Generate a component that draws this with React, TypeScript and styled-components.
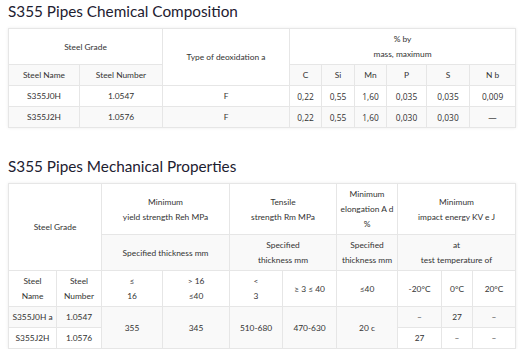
import React from "react";
import styled, { createGlobalStyle } from "styled-components";

const GlobalStyle = createGlobalStyle`
  html, body {
    margin: 0;
    padding: 0;
    background: #fff;
  }
  body {
    font-family: Lato, "Noto Sans", sans-serif;
    color: #333;
  }
`;

const Page = styled.div`
  padding: 0 0 0 8px;
  width: 510px;
`;

const Section = styled.section<{ $gap?: number }>`
  margin-top: ${(p) => p.$gap ?? 0}px;
`;

const Title = styled.h2`
  margin: 0 0 6px;
  font-size: 15.3px;
  line-height: 22px;
  font-weight: 400;
  color: #1d2030;
`;

const Table = styled.table`
  width: 508px;
  border-collapse: collapse;
  table-layout: fixed;
  box-shadow: 0 0 3px rgba(0, 0, 0, 0.08);

  tr:nth-child(even) td {
    background: #f9f9f9;
  }
`;

const Cell = styled.td<{ $num?: boolean }>`
  border: 1px solid #e6e6e6;
  padding: 3px 0 2px;
  font-size: 8.4px;
  line-height: 15px;
  text-align: center;
  vertical-align: middle;
  color: #333;
  background: #fff;
  white-space: nowrap;
  font-family: ${(p) => (p.$num ? '"Open Sans", Lato, sans-serif' : "inherit")};
`;

const chemCols = [71, 83, 127, 32, 33, 32, 40, 43, 46];
const mechCols = [48, 45, 61, 67, 53, 54, 61, 44, 31, 43];

const chemRows = [
  ["S355J0H", "1.0547", "F", "0,22", "0,55", "1,60", "0,035", "0,035", "0,009"],
  ["S355J2H", "1.0576", "F", "0,22", "0,55", "1,60", "0,030", "0,030", "—"],
];

function Cols({ widths }: { widths: number[] }) {
  return (
    <colgroup>
      {widths.map((w, i) => (
        <col key={i} style={{ width: w }} />
      ))}
    </colgroup>
  );
}

function ChemicalTable() {
  return (
    <Table>
      <Cols widths={chemCols} />
      <tbody>
        <tr>
          <Cell colSpan={2}>Steel Grade</Cell>
          <Cell rowSpan={2}>Type of deoxidation a</Cell>
          <Cell colSpan={6}>
            % by
            <br />
            mass, maximum
          </Cell>
        </tr>
        <tr>
          <Cell>Steel Name</Cell>
          <Cell>Steel Number</Cell>
          {["C", "Si", "Mn", "P", "S", "N b"].map((el) => (
            <Cell key={el}>{el}</Cell>
          ))}
        </tr>
        {chemRows.map((row) => (
          <tr key={row[0]}>
            {row.map((v, i) => (
              <Cell key={i} $num={i > 2}>
                {v}
              </Cell>
            ))}
          </tr>
        ))}
      </tbody>
    </Table>
  );
}

function MechanicalTable() {
  return (
    <Table>
      <Cols widths={mechCols} />
      <tbody>
        <tr>
          <Cell colSpan={2} rowSpan={2}>
            Steel Grade
          </Cell>
          <Cell colSpan={2}>
            Minimum
            <br />
            yield strength Reh MPa
          </Cell>
          <Cell colSpan={2}>
            Tensile
            <br />
            strength Rm MPa
          </Cell>
          <Cell>
            Minimum
            <br />
            elongation A d
            <br />%
          </Cell>
          <Cell colSpan={3}>
            Minimum
            <br />
            impact energy KV e J
          </Cell>
        </tr>
        <tr>
          <Cell colSpan={2}>Specified thickness mm</Cell>
          <Cell colSpan={2}>
            Specified
            <br />
            thickness mm
          </Cell>
          <Cell>
            Specified
            <br />
            thickness mm
          </Cell>
          <Cell colSpan={3}>
            at
            <br />
            test temperature of
          </Cell>
        </tr>
        <tr>
          <Cell>
            Steel
            <br />
            Name
          </Cell>
          <Cell>
            Steel
            <br />
            Number
          </Cell>
          <Cell>
            ≤
            <br />
            16
          </Cell>
          <Cell>
            &gt; 16
            <br />≤40
          </Cell>
          <Cell>
            &lt;
            <br />3
          </Cell>
          <Cell>≥ 3 ≤ 40</Cell>
          <Cell>≤40</Cell>
          <Cell>-20°C</Cell>
          <Cell>0°C</Cell>
          <Cell>20°C</Cell>
        </tr>
        <tr>
          <Cell>S355J0H a</Cell>
          <Cell>1.0547</Cell>
          <Cell rowSpan={2}>355</Cell>
          <Cell rowSpan={2}>345</Cell>
          <Cell rowSpan={2}>510-680</Cell>
          <Cell rowSpan={2}>470-630</Cell>
          <Cell rowSpan={2}>20 c</Cell>
          <Cell>–</Cell>
          <Cell>27</Cell>
          <Cell>–</Cell>
        </tr>
        <tr>
          <Cell>S355J2H</Cell>
          <Cell>1.0576</Cell>
          <Cell>27</Cell>
          <Cell>–</Cell>
          <Cell>–</Cell>
        </tr>
      </tbody>
    </Table>
  );
}

export default function App() {
  return (
    <Page>
      <GlobalStyle />
      <Section>
        <Title>S355 Pipes Chemical Composition</Title>
        <ChemicalTable />
      </Section>
      <Section $gap={27}>
        <Title>S355 Pipes Mechanical Properties</Title>
        <MechanicalTable />
      </Section>
    </Page>
  );
}
